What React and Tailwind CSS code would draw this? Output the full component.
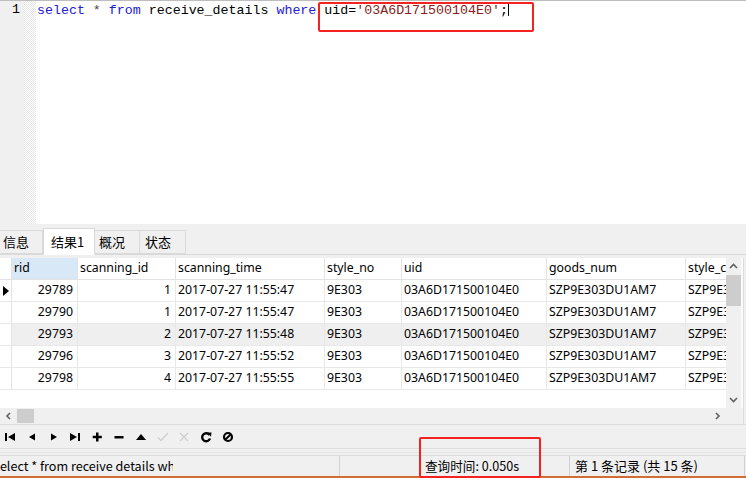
import React from 'react';

const cols = [
  { key: 'rid', w: 66, right: true },
  { key: 'scanning_id', w: 98, right: true },
  { key: 'scanning_time', w: 149 },
  { key: 'style_no', w: 77 },
  { key: 'uid', w: 145 },
  { key: 'goods_num', w: 139 },
  { key: 'style_c', w: 60 },
];

const rows = [
  ['29789', '1', '2017-07-27 11:55:47', '9E303', '03A6D171500104E0', 'SZP9E303DU1AM7', 'SZP9E303DU1AM7'],
  ['29790', '1', '2017-07-27 11:55:47', '9E303', '03A6D171500104E0', 'SZP9E303DU1AM7', 'SZP9E303DU1AM7'],
  ['29793', '2', '2017-07-27 11:55:48', '9E303', '03A6D171500104E0', 'SZP9E303DU1AM7', 'SZP9E303DU1AM7'],
  ['29796', '3', '2017-07-27 11:55:52', '9E303', '03A6D171500104E0', 'SZP9E303DU1AM7', 'SZP9E303DU1AM7'],
  ['29798', '4', '2017-07-27 11:55:55', '9E303', '03A6D171500104E0', 'SZP9E303DU1AM7', 'SZP9E303DU1AM7'],
];

const ui = { fontFamily: '"Noto Sans", "Noto Sans CJK SC", sans-serif' };

function Icon({ children, dim }) {
  return (
    <svg width="14" height="14" viewBox="0 0 14 14" className={dim ? 'text-[#cfcfcf]' : 'text-black'}>
      {children}
    </svg>
  );
}

export default function App() {
  return (
    <div className="w-[746px] h-[480px] bg-white overflow-hidden relative flex flex-col" style={ui}>
      {/* editor */}
      <div className="h-[224px] flex border-t border-[#bdbdbd] shrink-0">
        <div className="w-[24px] bg-[#f0f0f0] text-[13.3px] leading-[16px] pt-[1px] pl-[12px]" style={{ fontFamily: '"Liberation Mono", monospace' }}>1</div>
        <div className="w-[12px] bg-[repeating-conic-gradient(#e6e6e6_0_25%,#ffffff_0_50%)] bg-[length:2px_2px]" />
        <div className="flex-1 pl-[1px] pt-[1px] text-[13.3px] leading-[16px] whitespace-pre" style={{ fontFamily: '"Liberation Mono", monospace' }}>
          <span className="text-[#2020d8]">select</span>
          <span className="text-[#444]"> * </span>
          <span className="text-[#2020d8]">from</span>
          <span className="text-black"> receive_details </span>
          <span className="text-[#2020d8]">where</span>
          <span className="text-black"> uid=</span>
          <span className="text-[#8b1c1c]">'03A6D171500104E0'</span>
          <span className="text-black">;</span>
          <span className="inline-block w-px h-[14px] bg-black align-[-2px]" />
        </div>
      </div>

      {/* tabs */}
      <div className="h-[31px] bg-[#f0f0f0] flex items-end border-b border-[#d9d9d9] shrink-0" style={{ fontFamily: '"Noto Sans CJK SC", sans-serif' }}>
        <div className="w-[43px] h-[24px] bg-[#f0f0f0] border border-l-0 border-[#dadada] flex items-center pl-[3px] text-[13px]">信息</div>
        <div className="w-[52px] h-[27px] -mb-px bg-white border border-[#d9d9d9] border-b-white flex items-center pl-[7px] text-[13px]">结果1</div>
        <div className="w-[45px] h-[24px] bg-[#f0f0f0] border border-l-0 border-[#dadada] flex items-center pl-[4px] text-[13px]">概况</div>
        <div className="w-[46px] h-[24px] bg-[#f0f0f0] border border-l-0 border-[#dadada] flex items-center pl-[5px] text-[13px]">状态</div>
      </div>

      {/* grid */}
      <div className="h-[3px] bg-[#f0f0f0] shrink-0" />
      <div className="h-[166px] flex shrink-0 bg-[#f0f0f0]">
        <div className="w-[726px] flex flex-col">
          <div className="h-[150px] bg-white overflow-hidden text-[12.3px] text-black">
            <div className="flex h-[22px] border-b border-[#e3e3e3]">
              <div className="w-[12px] shrink-0 border-r border-[#e3e3e3]" />
              {cols.map((c) => (
                <div
                  key={c.key}
                  className={`shrink-0 border-r border-[#e3e3e3] flex items-center pl-[2px] whitespace-nowrap overflow-hidden ${c.key === 'rid' ? 'bg-[#d9e8f7]' : ''}`}
                  style={{ width: c.w }}
                >
                  {c.key}
                </div>
              ))}
            </div>
            {rows.map((r, i) => (
              <div key={i} className="flex h-[22px] border-b border-[#e8e8e8]">
                <div className="w-[12px] shrink-0 border-r border-[#e3e3e3] flex items-center pl-[3px]">
                  {i === 0 && (
                    <svg width="6" height="10" viewBox="0 0 6 10"><path d="M0 0 L6 5 L0 10 Z" fill="#000" /></svg>
                  )}
                </div>
                {cols.map((c, j) => (
                  <div
                    key={c.key}
                    className={`shrink-0 border-r border-[#e8e8e8] flex items-center whitespace-nowrap overflow-hidden ${c.right ? 'justify-end pr-[4px]' : 'pl-[2px]'} ${i === 2 ? 'bg-[#efefef]' : ''}`}
                    style={{ width: c.w }}
                  >
                    {r[j]}
                  </div>
                ))}
              </div>
            ))}
          </div>
          {/* horizontal scrollbar */}
          <div className="h-[16px] bg-[#f0f0f0] flex items-center">
            <svg width="17" height="16" viewBox="0 0 17 16"><path d="M10 5 L7 8 L10 11" stroke="#606060" strokeWidth="1.6" fill="none" /></svg>
            <div className="w-[17px] h-[14px] bg-[#cdcdcd]" />
            <div className="flex-1" />
            <svg width="17" height="16" viewBox="0 0 17 16"><path d="M7 5 L10 8 L7 11" stroke="#606060" strokeWidth="1.6" fill="none" /></svg>
          </div>
        </div>
        {/* vertical scrollbar */}
        <div className="w-[15px] h-[150px] bg-[#f0f0f0] flex flex-col items-center">
          <svg width="15" height="17" viewBox="0 0 15 17"><path d="M4 10 L7.5 6.5 L11 10" stroke="#606060" strokeWidth="1.6" fill="none" /></svg>
          <div className="w-[15px] h-[31px] bg-[#cdcdcd]" />
          <div className="flex-1" />
          <svg width="15" height="17" viewBox="0 0 15 17"><path d="M4 7 L7.5 10.5 L11 7" stroke="#606060" strokeWidth="1.6" fill="none" /></svg>
        </div>
        <div className="w-[2px] h-[150px] bg-[#fbfbfb]" />
        <div className="w-[1px] h-[166px] bg-[#dcdcdc]" />
      </div>
      <div className="h-px bg-[#dcdcdc] shrink-0" />

      {/* toolbar */}
      <div className="h-[23px] bg-[#f0f0f0] flex items-center gap-[7.8px] pl-[3px] shrink-0">
        <Icon><path d="M2 3 H4 V11 H2 Z M12 3 L5 7 L12 11 Z" fill="currentColor" /></Icon>
        <Icon><path d="M10 3.5 L4 7 L10 10.5 Z" fill="currentColor" /></Icon>
        <Icon><path d="M4 3.5 L10 7 L4 10.5 Z" fill="currentColor" /></Icon>
        <Icon><path d="M2 3 L9 7 L2 11 Z M10 3 H12 V11 H10 Z" fill="currentColor" /></Icon>
        <Icon><path d="M6 2.5 H8.5 V5.8 H11.8 V8.3 H8.5 V11.5 H6 V8.3 H2.7 V5.8 H6 Z" fill="currentColor" /></Icon>
        <Icon><path d="M2.5 6 H11.5 V8.5 H2.5 Z" fill="currentColor" /></Icon>
        <Icon><path d="M2 10 L7 4 L12 10 Z" fill="currentColor" /></Icon>
        <Icon dim><path d="M2 7.5 L5 10.5 L12 3" stroke="currentColor" strokeWidth="1.3" fill="none" /></Icon>
        <Icon dim><path d="M3 3 L11 11 M11 3 L3 11" stroke="currentColor" strokeWidth="1.3" fill="none" /></Icon>
        <Icon><path d="M10.5 5 A4 4 0 1 0 11 8.5" stroke="currentColor" strokeWidth="2.4" fill="none" /><path d="M8 2.5 L12.5 2.5 L12 6.8 Z" fill="currentColor" /></Icon>
        <Icon><circle cx="7" cy="7" r="4" stroke="currentColor" strokeWidth="2.2" fill="none" /><path d="M4.5 9.5 L9.5 4.5" stroke="currentColor" strokeWidth="2" /></Icon>
      </div>
      <div className="h-[4px] bg-[#f0f0f0] border-t border-[#dcdcdc] shrink-0" />
      <div className="h-[3px] bg-[#f0f0f0] border-t border-[#e4e4e4] shrink-0" />

      {/* status bar */}
      <div className="h-[21px] bg-[#f0f0f0] flex text-[12.6px] text-black shrink-0 border-t border-[#dcdcdc]" style={{ fontFamily: '"Noto Sans CJK SC", sans-serif' }}>
        <div className="w-[340px] overflow-hidden border-r border-[#d0d0d0] flex items-center">
          <div className="w-[173px] overflow-hidden whitespace-nowrap">
            <span className="ml-[-6px] inline-block">select * from receive details where uid='03A6D171500104E0';</span>
          </div>
        </div>
        <div className="w-[230px] border-r border-[#d0d0d0] flex items-center pl-[85px] whitespace-nowrap">查询时间: 0.050s</div>
        <div className="w-[175px] border-r border-[#d0d0d0] flex items-center pl-[5px] whitespace-nowrap text-[13px]">第 1 条记录 (共 15 条)</div>
      </div>
      <div className="h-[2px] bg-[#cf6d33] shrink-0" />
      <div className="flex-1 bg-white" />

      {/* annotations */}
      <div className="absolute left-[318px] top-[2px] w-[216px] h-[30px] border-2 border-[#f52222] rounded-[2px]" />
      <div className="absolute left-[419px] top-[437px] w-[122px] h-[41px] border-2 border-[#f52222] rounded-[2px]" />
    </div>
  );
}
